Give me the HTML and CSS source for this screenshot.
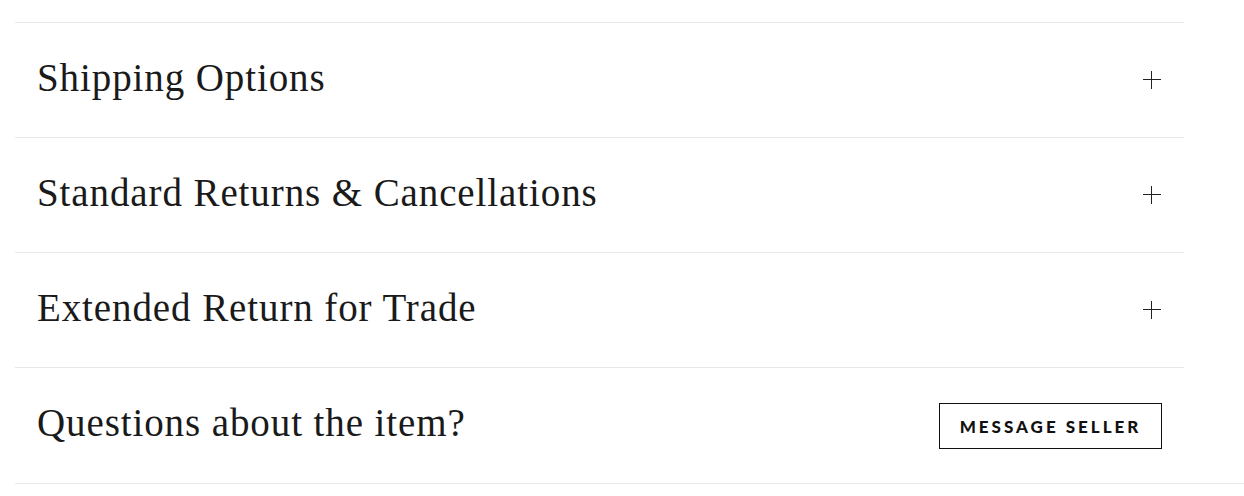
FILE: index.html
```html
<!DOCTYPE html>
<html lang="en">
<head>
    <meta charset="UTF-8">
    <meta name="viewport" content="width=device-width, initial-scale=1.0">
    <title>Item Details</title>
    <link rel="stylesheet" href="styles.css">
</head>
<body>
    <div class="details">
        <!-- Accordion rows -->
        <div class="panel">
            <div class="row">
                <h3 class="row-title">Shipping Options</h3>
                <span class="plus"></span>
            </div>
            <div class="row">
                <h3 class="row-title">Standard Returns &amp; Cancellations</h3>
                <span class="plus"></span>
            </div>
            <div class="row">
                <h3 class="row-title">Extended Return for Trade</h3>
                <span class="plus"></span>
            </div>
        </div>
        <!-- Contact seller -->
        <div class="contact">
            <div class="row contact-row">
                <h3 class="row-title">Questions about the item?</h3>
                <button class="button">Message Seller</button>
            </div>
        </div>
    </div>
</body>
</html>
```

FILE: styles.css
```css
body {
    margin: 0;
    background: #fff;
    color: #1a1a1a;
    font-family: "Liberation Serif", serif;
}
.details {
    padding-top: 22px;
    margin-left: 15px;
}
.panel {
    width: 1169px;
}
.row {
    width: 1169px;
    height: 115px;
    box-sizing: border-box;
    border-top: 1px solid #e8e8e8;
    display: flex;
    align-items: center;
    justify-content: space-between;
    padding: 0 22px;
}
.contact-row {
    height: 116px;
}
.row-title {
    margin: 0 0 6px 0;
    font-weight: normal;
    font-size: 39px;
    letter-spacing: 0.9px;
}
.plus {
    position: relative;
    width: 18px;
    height: 18px;
    margin-right: 1px;
}
.plus::before,
.plus::after {
    content: "";
    position: absolute;
    background: #222;
}
.plus::before {
    left: 0;
    right: 0;
    top: 8px;
    height: 1px;
}
.plus::after {
    top: 0;
    bottom: 0;
    left: 8px;
    width: 1px;
}
.contact {
    border-bottom: 1px solid #e8e8e8;
}
.button {
    background: #fff;
    border: 1px solid #111;
    border-radius: 0;
    width: 223px;
    height: 46px;
    margin-top: 1px;
    padding: 0;
    font-family: Lato, sans-serif;
    font-weight: 900;
    font-size: 17px;
    letter-spacing: 3px;
    text-transform: uppercase;
    color: #111;
    cursor: pointer;
}
```
